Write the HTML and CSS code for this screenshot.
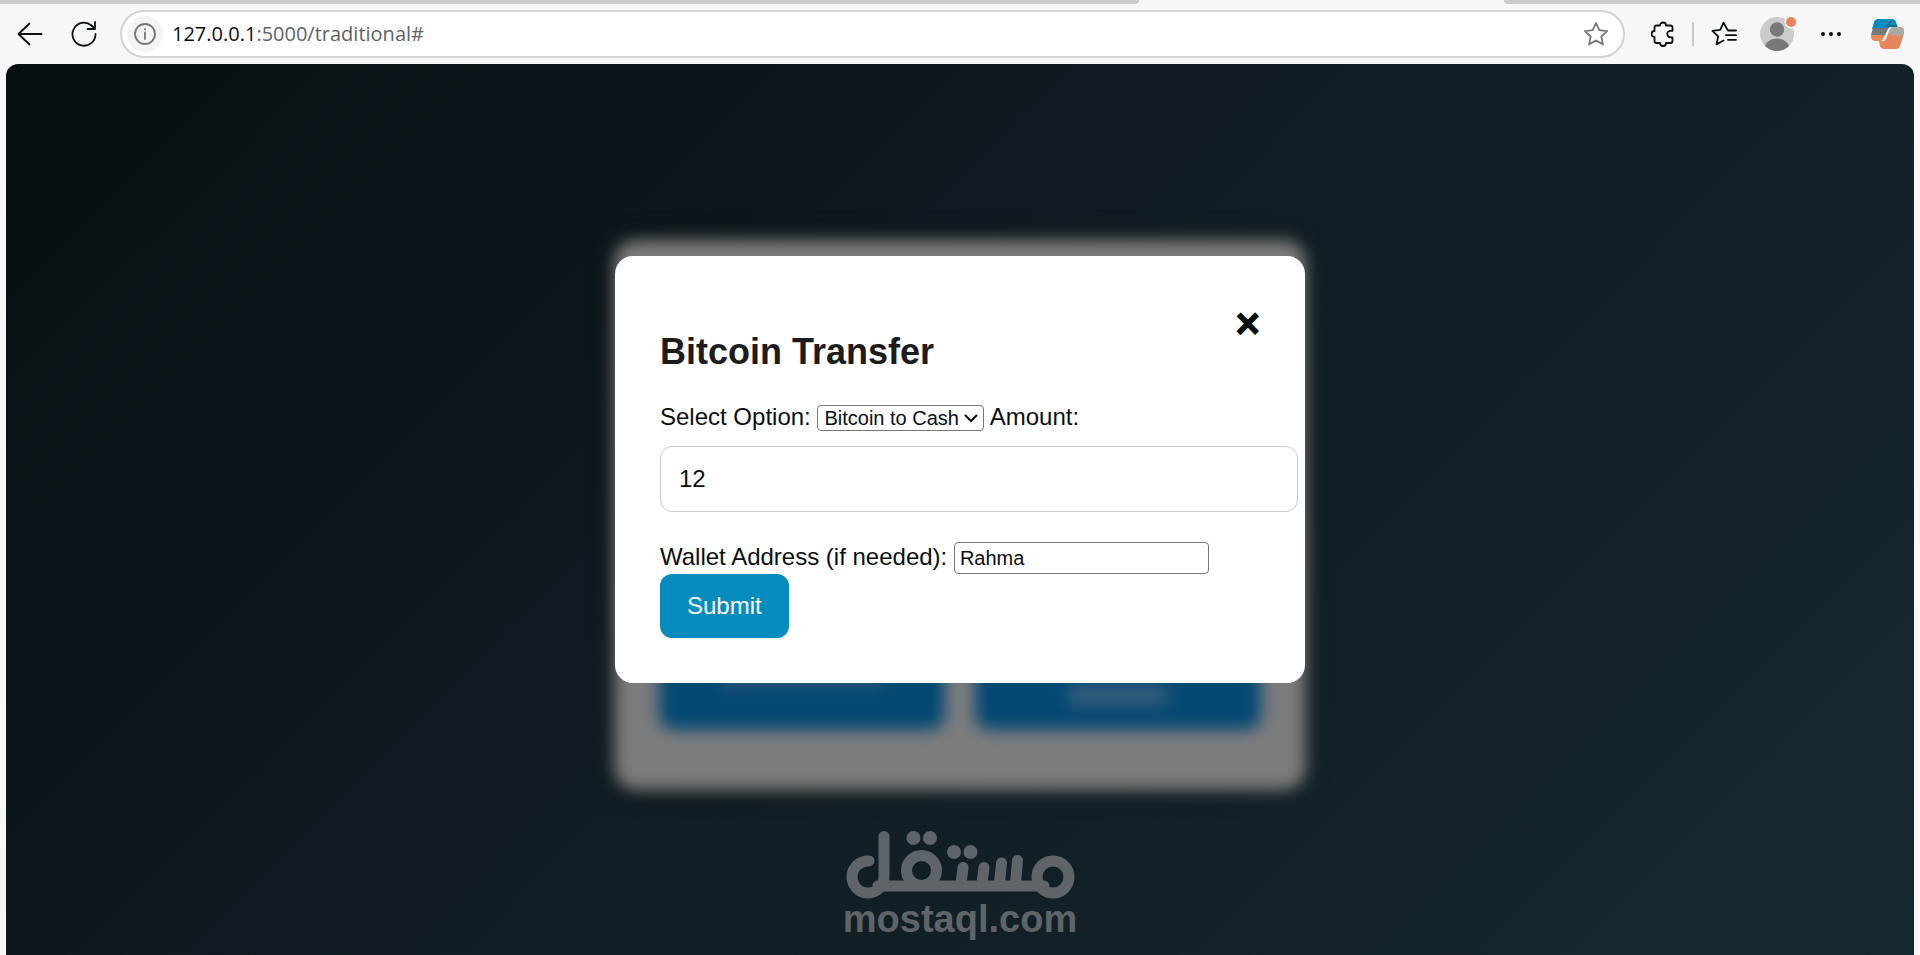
FILE: index.html
```html
<!DOCTYPE html>
<html lang="en">
<head>
<meta charset="utf-8">
<title>Bitcoin Transfer</title>
<link rel="stylesheet" href="styles.css">
</head>
<body>
<header class="chrome">
  <div class="tabstrip"><span class="tab-left"></span><span class="tab-right"></span></div>
  <div class="toolbar">
    <button class="tool" type="button" aria-label="Back"><svg width="26" height="24" viewBox="0 0 26 24"><path d="M24.500 12H1.500M12.500 1.500L1.500 12l11 10.500"/></svg></button>
    <button class="tool reload" type="button" aria-label="Refresh"><svg width="26" height="26" viewBox="0 0 26 26"><path d="M24.500 13A11.500 11.500 0 1 1 20.500 4.500L23.800 7.500M24 1v7h-7.500"/></svg></button>
    <div class="address">
      <button class="info" type="button" aria-label="Site information"><svg width="22" height="22" viewBox="0 0 22 22"><circle cx="11" cy="11" r="10"/><path d="M11 9.500v6.500M11 5.800v.6"/></svg></button>
      <div class="url"><span class="host">127.0.0.1</span>:5000/traditional#</div>
      <button class="fav" type="button" aria-label="Favorite"><svg width="26" height="26" viewBox="0 0 26 26"><path d="M13 2l3.300 7.200 7.900 1-5.900 5.300 1.600 7.900L13 19.500l-6.900 3.900 1.600-7.900-5.900-5.300 7.900-1z"/></svg></button>
    </div>
    <div class="actions">
      <button class="tool" type="button" aria-label="Extensions"><svg width="24" height="26" viewBox="0 0 24 26"><path d="M5.500 4.500H9a3 3 0 0 1 6 0h4.500q2 0 2 2v3.300h-2a3.300 3.300 0 0 0 0 6.600h2v3.600q0 2-2 2H15a3 3 0 0 1-6 0H5.500q-2 0-2-2v-4a3 3 0 0 1 0-6V6.500q0-2 2-2z"/></svg></button>
      <span class="divider"></span>
      <button class="tool" type="button" aria-label="Favorites list"><svg width="26" height="26" viewBox="0 0 26 26"><path d="M16.500 8.800L12.500 1.800 9.200 8.800l-7.800 1.100 5.800 5.500-1.700 8L12.500 19.500M17 9.500h8M15 14.200h10M17 18.800h8"/></svg></button>
      <button class="tool profile" type="button" aria-label="Profile"><svg width="36" height="36" viewBox="0 0 36 36"><defs><clipPath id="avatar"><circle cx="17" cy="19" r="17"/></clipPath></defs><g stroke="none"><circle cx="17" cy="19" r="17" fill="#cacccc"/><circle cx="17" cy="14.500" r="7.200" fill="#777879"/><ellipse cx="17" cy="34" rx="12.500" ry="10.500" fill="#777879" clip-path="url(#avatar)"/><circle cx="31" cy="7" r="6.500" fill="#f7f7f7"/><circle cx="31" cy="7" r="5" fill="#e7855b"/></g></svg></button>
      <button class="tool" type="button" aria-label="More"><svg width="22" height="6" viewBox="0 0 22 6"><g fill="#080f13" stroke="none"><circle cx="3" cy="3" r="2"/><circle cx="11" cy="3" r="2"/><circle cx="19" cy="3" r="2"/></g></svg></button>
      <button class="tool copilot" type="button" aria-label="Copilot"><svg width="34" height="32" viewBox="0 0 34 32"><g stroke="none"><path d="M8 1h14q3 0 4 3l2 6h-8L8 14 2 11 4 4q1-3 4-3z" fill="#058cbf"/><path d="M3 10h16l-3 9H1q0-4 2-9z" fill="#777879"/><path d="M1 17h14l-2 6H5q-5-1-4-6z" fill="#e7855b"/><path d="M20 9h10q5 1 4 6l-4 13q-1 3-4 3H14q-3 0-4-3l-1-5h5z" fill="#e7855b"/><path d="M20 9h10q4 1 4 7-2 3-6 2l-10-2z" fill="#aaa9a8"/><path d="M18 11q1-2 4-2-2 1-3 4l-3 8q-1 3-5 2 2-1 3-4z" fill="#f7f7f7"/><path d="M17 8l5-6M18 8h8" stroke="#344b58" stroke-width="1"/></g></svg></button>
    </div>
  </div>
</header>
<main class="page">
  <section class="card" aria-hidden="true">
    <div class="tile"><span class="tile-text"></span></div>
    <div class="tile"><span class="tile-text low"></span></div>
  </section>
  <div class="overlay">
    <form class="modal">
      <button class="close" type="button" aria-label="Close">&times;</button>
      <h2>Bitcoin Transfer</h2>
      <label for="option">Select Option:</label>
      <select id="option" class="option"><option>Bitcoin to Cash</option><option>Cash to Bitcoin</option></select>
      <label for="amount">Amount:</label>
      <input id="amount" class="amount" type="text" inputmode="numeric" value="12">
      <label for="wallet">Wallet Address (if needed):</label>
      <input id="wallet" class="wallet" type="text" value="Rahma"><br>
      <button class="submit" type="submit">Submit</button>
    </form>
  </div>
  <div class="brand">
    <svg width="232" height="72" viewBox="0 0 232 72" role="img" aria-label="مستقل">
      <g fill="none" stroke="#5f6468" stroke-width="11" stroke-linecap="round">
        <path d="M25 33A16 16 0 1 0 40 49V8.500M34 58H200"/>
        <circle cx="77.500" cy="42.500" r="15"/>
        <circle cx="209" cy="49" r="16"/>
        <path d="M119 39.500l-2 16M140 39.500l-2 16M157.500 35l-2 20M173.500 32.500l-2 23"/>
      </g>
      <g fill="#5f6468"><circle cx="69.500" cy="10" r="7"/><circle cx="86" cy="10" r="7"/><circle cx="110" cy="24" r="7"/><circle cx="126.500" cy="24" r="7"/></g>
    </svg>
    <span class="brand-name">mostaql.com</span>
  </div>
</main>
</body>
</html>
```
FILE: styles.css
```css
* { box-sizing: border-box; }
html, body { height: 100%; }
body {
  margin: 0;
  display: flex;
  flex-direction: column;
  background: #f7f7f7;
  color: #080f13;
  font-family: "Liberation Sans", Arial, sans-serif;
  font-size: 24px;
  overflow: hidden;
}
button { font: inherit; color: inherit; border: 0; padding: 0; background: none; }
svg { display: block; }

.tabstrip { display: flex; justify-content: space-between; height: 4px; }
.tabstrip span { background: #cacccc; }
.tab-left { width: 1139px; border-bottom-right-radius: 6px; }
.tab-right { width: 416px; border-bottom-left-radius: 6px; }
.toolbar { display: flex; align-items: center; height: 60px; padding: 0 16px 0 17px; }
.toolbar svg { fill: none; stroke: #080f13; stroke-width: 1.8; stroke-linejoin: round; stroke-linecap: round; }
.tool { margin-right: 28px; }
.toolbar .reload { margin-right: 23px; }
.address {
  flex: 1;
  display: flex;
  align-items: center;
  height: 48px;
  padding: 0 14px 0 5px;
  border: 2px solid #d2d4d4;
  border-radius: 24px;
  background: #fff;
}
.info { display: grid; place-items: center; width: 36px; height: 36px; border-radius: 50%; background: #f4f4f4; }
.toolbar .info svg, .toolbar .fav svg { stroke: #777879; }
.url { flex: 1; padding-left: 9px; font: 20px/28px "Open Sans", "Noto Sans", sans-serif; color: #5f6468; }
.host { color: #080f13; }
.actions { display: flex; align-items: center; padding-left: 26px; }
.actions .tool { margin-right: 17px; }
.divider { width: 2px; height: 24px; margin-right: 17px; background: #cacccc; }
.actions .profile { margin: 0 24px 2px 6px; }
.actions .copilot { margin: 0 0 0 11px; }

.page {
  position: relative;
  flex: 1;
  margin: 0 6px;
  border-radius: 12px 12px 0 0;
  overflow: hidden;
  background: linear-gradient(135deg, #060e11, #101d22 50%, #16282f);
}
.card {
  position: absolute;
  top: 176px;
  left: 50%;
  width: 692px;
  height: 550px;
  margin-left: -346px;
  padding: 0 45px 60px;
  display: flex;
  gap: 30px;
  align-items: flex-end;
  border-radius: 22px;
  background: #7c7c7d;
  box-shadow: 0 0 20px #0006;
  filter: blur(8px);
}
.tile { flex: 1; height: 100px; border-radius: 15px; background: #044873; display: flex; justify-content: center; align-items: flex-start; }
.tile-text { width: 160px; height: 22px; margin-top: 34px; background: #335b78; }
.tile-text.low { width: 100px; margin-top: 54px; }
.overlay {
  position: absolute;
  inset: 0;
  display: flex;
  justify-content: center;
  align-items: flex-start;
  padding-top: 192px;
}
.modal { width: 690px; padding: 45px; border-radius: 18px; background: #fff; line-height: 28px; }
.close { float: right; font-size: 42px; line-height: 46px; font-weight: bold; -webkit-text-stroke: 1px #080f13; }
h2 { margin: 30px 0; font-size: 36px; line-height: 42px; color: #1c1c1c; }
.option, .wallet { font: 20px "Liberation Sans", Arial, sans-serif; color: #080f13; background: #fff; border: 1px solid #777879; border-radius: 4px; }
.option {
  width: 167px;
  height: 26px;
  padding: 0 6px;
  appearance: none;
  background: #fff url("data:image/svg+xml,%3Csvg xmlns='http://www.w3.org/2000/svg' width='14' height='10' viewBox='0 0 14 10'%3E%3Cpath d='M1 2l6 6 6-6' fill='none' stroke='%23080f13' stroke-width='2'/%3E%3C/svg%3E") no-repeat right 5px center;
}
.amount {
  display: block;
  box-sizing: content-box;
  width: 100%;
  height: 28px;
  margin: 15px 0 30px;
  padding: 18px;
  border: 1px solid #cacccc;
  border-radius: 12px;
  font: inherit;
  color: inherit;
}
.wallet { width: 255px; height: 32px; padding: 0 5px; }
.submit { height: 64px; padding: 0 27px; border-radius: 12px; background: #058cbf; color: #fff; }
.brand {
  position: absolute;
  left: 0;
  right: 0;
  bottom: 17px;
  display: flex;
  flex-direction: column;
  align-items: center;
  color: #5f6468;
}
.brand-name { font-size: 38px; line-height: 38px; font-weight: bold; }
```
